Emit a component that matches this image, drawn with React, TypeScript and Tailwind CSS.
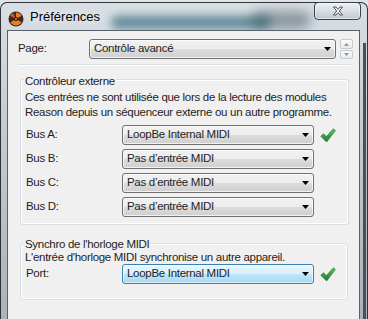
const BUSES = [
  { label: "Bus A:", value: "LoopBe Internal MIDI", ok: true },
  { label: "Bus B:", value: "Pas d\u2019entrée MIDI", ok: false },
  { label: "Bus C:", value: "Pas d\u2019entrée MIDI", ok: false },
  { label: "Bus D:", value: "Pas d\u2019entrée MIDI", ok: false },
];

const Arrow = () => (
  <svg width="7" height="4" viewBox="0 0 7 4" className="absolute right-[4px] top-1/2 -translate-y-1/2">
    <path d="M0 0 H7 L3.5 4 Z" fill="#000" />
  </svg>
);

function Combo({ text, width, active }: { text: string; width: string; active?: boolean }) {
  return (
    <div
      className={
        active
          ? `relative flex h-[20px] ${width} items-center rounded-[3px] border border-[#3c7fb1] bg-[linear-gradient(to_bottom,#eaf6fd_0%,#d9f0fc_50%,#bee6fd_50%,#a7d9f5_100%)] pl-[4px] shadow-[inset_0_0_0_1px_rgba(255,255,255,0.6)]`
          : `relative flex h-[20px] ${width} items-center rounded-[3px] border border-[#707070] bg-[linear-gradient(to_bottom,#f2f2f2_0%,#ebebeb_50%,#dddddd_50%,#cfcfcf_100%)] pl-[4px] shadow-[inset_0_0_0_1px_rgba(255,255,255,0.7)]`
      }
    >
      <span className="leading-none">{text}</span>
      <Arrow />
    </div>
  );
}

const Check = () => (
  <svg width="16" height="15" viewBox="0 0 16 15" className="ml-[6px]">
    <defs>
      <linearGradient id="g" x1="0" y1="0" x2="0" y2="1">
        <stop offset="0" stopColor="#5cc860" />
        <stop offset="1" stopColor="#13812a" />
      </linearGradient>
    </defs>
    <path d="M0.8 8.2 L3.6 5.8 L6.4 8.6 L13.4 0.8 L15.4 2.6 L6.6 14 Z" fill="url(#g)" stroke="#1a6a2a" strokeWidth="0.6" />
  </svg>
);

const Logo = () => (
  <svg width="16" height="16" viewBox="0 0 16 16" className="mt-[4px]">
    <circle cx="8" cy="8" r="7.5" fill="#3a2a20" />
    <path d="M8 1.5 A6.5 6.5 0 0 1 13.6 4.8 L8 8 Z" fill="#f07a20" />
    <path d="M13.6 11.2 A6.5 6.5 0 0 1 2.4 11.2 L8 8 Z" fill="#f07a20" />
    <path d="M2.4 4.8 A6.5 6.5 0 0 1 5 2.2 L8 8 Z" fill="#e25a10" />
    <circle cx="8" cy="8" r="2" fill="#1a1410" />
    <circle cx="8" cy="8" r="0.9" fill="#f5a040" />
  </svg>
);

const CloseBtn = () => (
  <div className="absolute right-[6px] top-[-1px] flex h-[18px] w-[47px] items-center justify-center rounded-[4px] border border-[#3b4147] bg-[linear-gradient(to_bottom,rgba(255,255,255,0.55),rgba(220,226,232,0.35)_50%,rgba(150,162,172,0.35))] shadow-[inset_0_0_0_1px_rgba(255,255,255,0.5)]">
    <svg width="12" height="10" viewBox="0 0 12 10">
      <path
        d="M1.5 1 L4 1 L6 3.4 L8 1 L10.5 1 L7.3 5 L10.5 9 L8 9 L6 6.6 L4 9 L1.5 9 L4.7 5 Z"
        fill="#fff"
        stroke="#3a4046"
        strokeWidth="0.9"
        strokeLinejoin="round"
      />
    </svg>
  </div>
);

const Spin = () => (
  <div className="ml-[4px] flex h-[20px] w-[13px] flex-col gap-[1px]">
    <div className="flex h-[10px] items-center justify-center rounded-[2px] border border-[#c3cbd3] bg-[linear-gradient(to_bottom,#fbfbfb,#e8ebee)]">
      <svg width="5" height="3" viewBox="0 0 5 3">
        <path d="M0 3 H5 L2.5 0 Z" fill="#8d9aa6" />
      </svg>
    </div>
    <div className="flex h-[9px] items-center justify-center rounded-[2px] border border-[#c3cbd3] bg-[linear-gradient(to_bottom,#fbfbfb,#e8ebee)]">
      <svg width="5" height="3" viewBox="0 0 5 3">
        <path d="M0 0 H5 L2.5 3 Z" fill="#8d9aa6" />
      </svg>
    </div>
  </div>
);

export default function App() {
  return (
    <div className="h-[319px] w-[368px] overflow-hidden bg-[#dfe4e8] font-['Liberation_Sans',Arial,sans-serif] text-[11.5px] tracking-[-0.3px] text-[#1e1e1e]">
      <div className="relative mt-[2px] flex h-[317px] flex-col rounded-t-[7px] border border-b-0 border-[#2f3438] bg-[linear-gradient(to_bottom,#d9dfe4,#c6ced5_35%,#a9b3bb_100%)]">
        {/* glass streaks */}
        <div className="pointer-events-none absolute left-[110px] top-[13px] h-[13px] w-[160px] rounded-full bg-[#2c6878] opacity-70 blur-[5px]" />
        <div className="pointer-events-none absolute left-[250px] top-[8px] h-[18px] w-[60px] rounded-full bg-[#40535e] opacity-50 blur-[6px]" />

        {/* title bar */}
        <div className="relative flex h-[27px] items-center pl-[7px]">
          <Logo />
          <span className="ml-[6px] text-[13px] tracking-normal text-black [text-shadow:0_0_6px_rgba(255,255,255,0.9)]">Préférences</span>
          <CloseBtn />
        </div>

        {/* client area */}
        <div className="relative ml-[6px] mr-[7px] flex flex-1 flex-col border border-b-0 border-[#56616a] bg-[#f0f0f0]">
          {/* page row */}
          <div className="ml-[10px] mt-[8px] flex h-[20px] items-center">
            <span className="w-[71px]">Page:</span>
            <Combo text="Contrôle avancé" width="w-[247px]" />
            <Spin />
          </div>
          <div className="ml-[10px] mt-[5px] h-[2px] w-[333px] border-t border-b border-t-[#d5dfe5] border-b-white" />

          {/* group 1 */}
          <div className="relative ml-[12px] mt-[13px] flex h-[146px] w-[329px] flex-col rounded-[3px] border border-[#d5dfe5] pl-[4px] pt-[10px] shadow-[inset_0_0_0_1px_#fff]">
            <span className="absolute left-[3px] top-[-6px] bg-[#f0f0f0] px-[1px] leading-[15px]">Contrôleur externe</span>
            <p className="whitespace-nowrap leading-[15px]">
              Ces entrées ne sont utilisée que lors de la lecture des modules
              <br />
              Reason depuis un séquenceur externe ou un autre programme.
            </p>
            <div className="mt-[5px] flex flex-col gap-[4px]">
              {BUSES.map((b) => (
                <div key={b.label} className="flex h-[20px] items-center">
                  <span className="w-[97px] pl-[1px]">{b.label}</span>
                  <Combo text={b.value} width="w-[192px]" />
                  {b.ok && <Check />}
                </div>
              ))}
            </div>
          </div>

          {/* group 2 */}
          <div className="relative ml-[12px] mt-[18px] flex h-[57px] w-[328px] flex-col rounded-[3px] border border-[#d5dfe5] pl-[4px] pt-[6px] shadow-[inset_0_0_0_1px_#fff]">
            <span className="absolute left-[3px] top-[-7px] bg-[#f0f0f0] px-[1px] leading-[15px]">Synchro de l&apos;horloge MIDI</span>
            <p className="whitespace-nowrap leading-[15px]">L&apos;entrée d&apos;horloge MIDI synchronise un autre appareil.</p>
            <div className="mt-[-1px] flex h-[20px] items-center">
              <span className="w-[97px] pl-[1px]">Port:</span>
              <Combo text="LoopBe Internal MIDI" width="w-[192px]" active />
              <Check />
            </div>
          </div>
        </div>

        {/* right frame stripes */}
        <div className="pointer-events-none absolute bottom-0 right-[1px] top-[40px] w-[3px] bg-[#4a5058]" />
      </div>
    </div>
  );
}
